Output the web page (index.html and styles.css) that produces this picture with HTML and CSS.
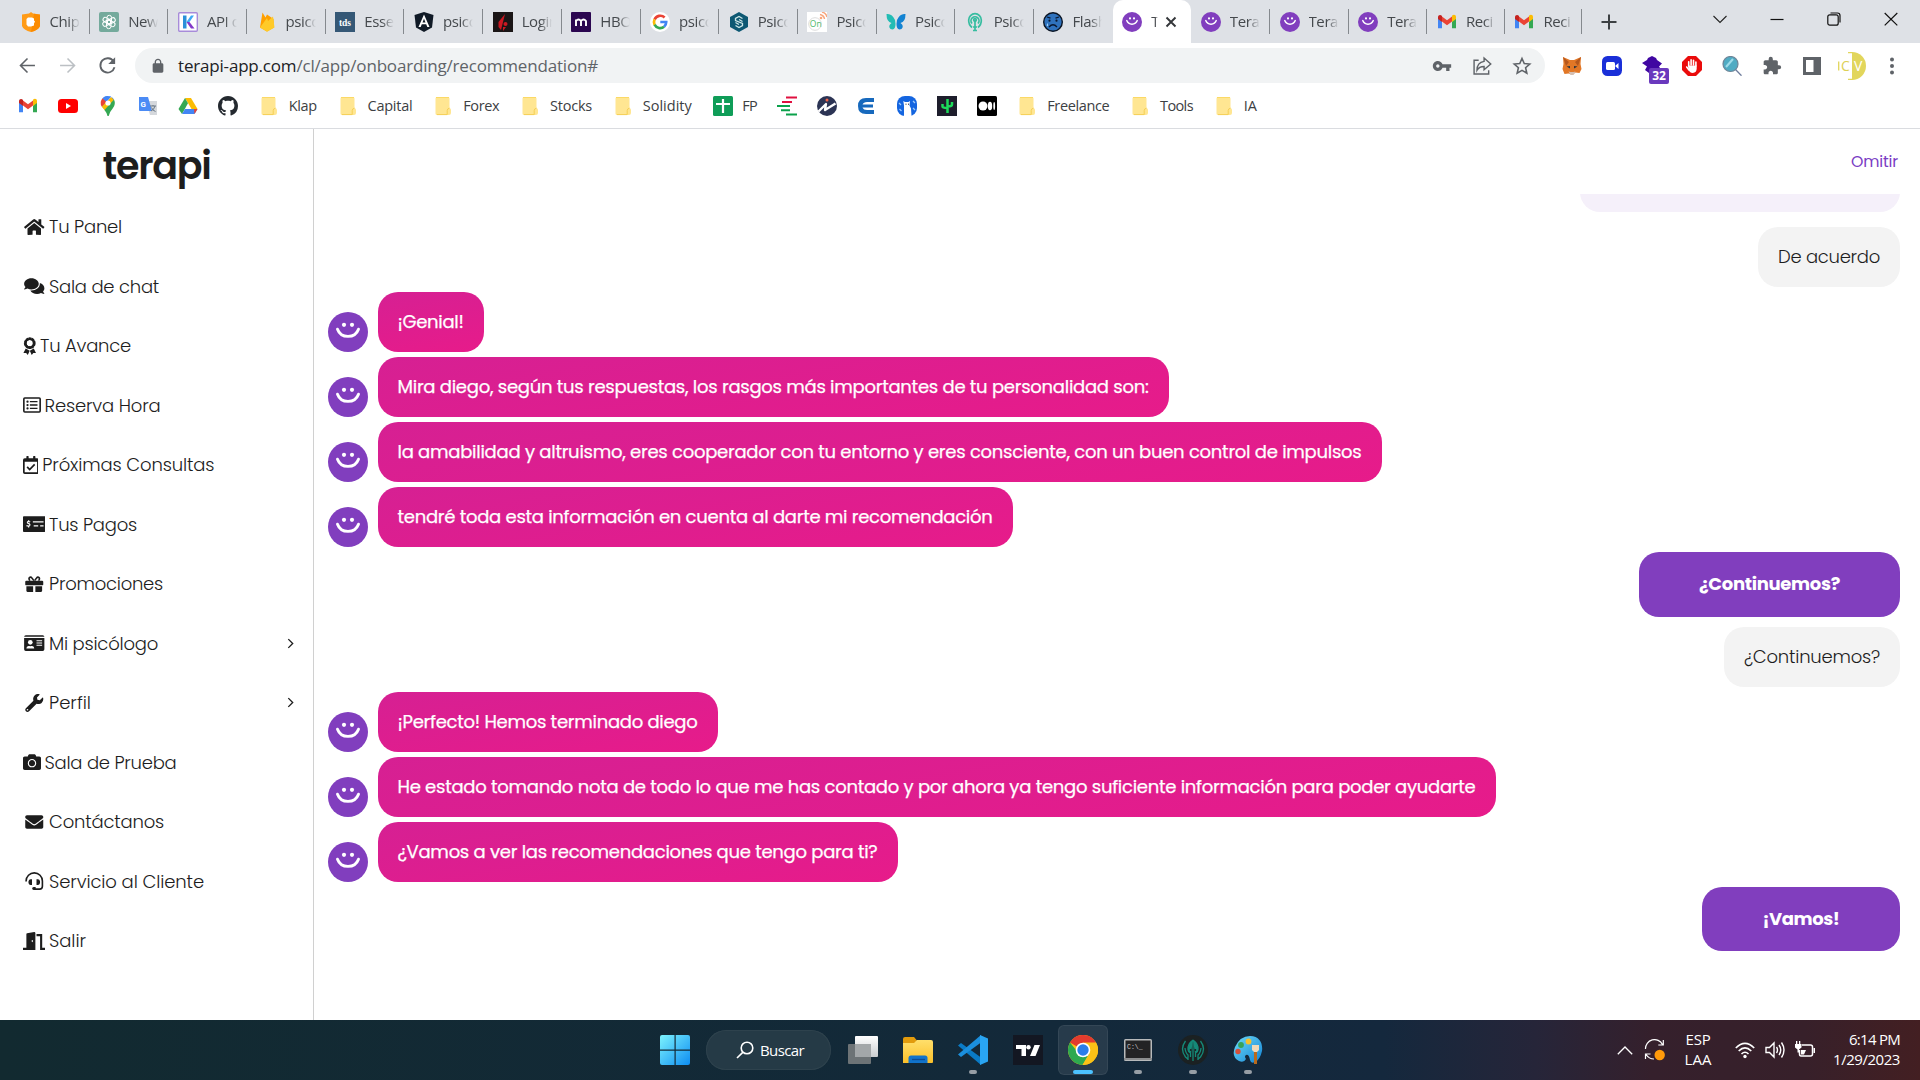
FILE: index.html
```html
<!DOCTYPE html>
<html lang="es">
<head>
<meta charset="utf-8">
<title>Terapi</title>
<link rel="stylesheet" href="styles.css">
</head>
<body>
<svg class="sprite" aria-hidden="true">
  <defs>
    <linearGradient id="g-win" x1="0" y1="0" x2="1" y2="1"><stop offset="0" stop-color="#7df3fd"/><stop offset="1" stop-color="#0d8df2"/></linearGradient>
    <linearGradient id="g-fold" x1="0" y1="0" x2="0" y2="1"><stop offset="0" stop-color="#ffdf6b"/><stop offset="1" stop-color="#fbc02a"/></linearGradient>
    <linearGradient id="g-paint" x1="0" y1="0" x2="1" y2="1"><stop offset="0" stop-color="#6fdcf8"/><stop offset="1" stop-color="#1283d4"/></linearGradient>
    <linearGradient id="g-tv" x1="0" y1="0" x2="0" y2="1"><stop offset="0" stop-color="#fff"/><stop offset="1" stop-color="#c9cdd0"/></linearGradient>
  </defs>
  <symbol id="smile" viewBox="0 0 40 40"><circle cx="20" cy="20" r="20" fill="#813ebe"/><circle cx="16" cy="12.8" r="2.1" fill="#fff"/><circle cx="24" cy="12.8" r="2.1" fill="#fff"/><path d="M9.5 17.2C13 26.8 27 26.8 30.5 17.2" fill="none" stroke="#fff" stroke-width="2.9" stroke-linecap="round"/></symbol>
  <symbol id="gmail" viewBox="0 0 20 20"><path d="M1 5v11.2h4V9.6z" fill="#4285f4"/><path d="M19 5v11.2h-4V9.6z" fill="#34a853"/><path d="M15 5v5l4-3V5c0-2-2.300-3-4-1.200z" fill="#fbbc04"/><path d="M5 4.500l5 3.800 5-3.800v5L10 13.200 5 9.500z" fill="#ea4335"/><path d="M1 5v2l4 3V4C3.500 2.300 1 3 1 5z" fill="#c5221f"/></symbol>
  <symbol id="folder" viewBox="0 0 16 20"><path d="M2 1h11q1.500 0 1.500 1.500V12q1.500.5 1.500 2v3q0 2-2 2H2Q.500 19 .500 17.500v-15Q.500 1 2 1z" fill="#ffe692"/><path d="M12.200 18.600v-4q0-2 2.300-2.500M12.200 18.600H2" fill="none" stroke="#f5cf55" stroke-width="1"/><path d="M1 1.500h13" stroke="#fbd966"/></symbol>
  <symbol id="back" viewBox="0 0 24 24"><path d="M20.500 12H4.500M12 4l-8 8 8 8" fill="none" stroke="currentColor" stroke-width="1.800"/></symbol>
  <symbol id="chev" viewBox="0 0 10 10"><path d="M3 1l4 4-4 4" fill="none" stroke="currentColor" stroke-width="1.200"/></symbol>
</svg>

<header class="browser">
  <div class="tabs">
    <div class="tab"><svg class="fav" viewBox="0 0 20 20"><path d="M10 0l2 1.500 7 1V14q-1.500 4-9 6-7.500-2-9-6V2.500l7-1z" fill="#ff9b17"/><path d="M13 1.700l6 1V14q-1.500 4-9 6z" fill="#fb8b00"/><path d="M7 5.500h4l2 1v2l1 1-1 2v2l-3 1H7l-1.500-2V7z" fill="#fff"/></svg><span>Chip C</span></div>
    <div class="tab"><svg class="fav" viewBox="0 0 20 20"><rect width="20" height="20" rx="2" fill="#74aa9c"/><g fill="none" stroke="#fff" stroke-width="1"><rect x="8" y="3.300" width="4.500" height="8.500" rx="2.200"/><rect x="8" y="3.300" width="4.500" height="8.500" rx="2.200" transform="rotate(60 10 10)"/><rect x="8" y="3.300" width="4.500" height="8.500" rx="2.200" transform="rotate(120 10 10)"/><rect x="8" y="3.300" width="4.500" height="8.500" rx="2.200" transform="rotate(180 10 10)"/><rect x="8" y="3.300" width="4.500" height="8.500" rx="2.200" transform="rotate(240 10 10)"/><rect x="8" y="3.300" width="4.500" height="8.500" rx="2.200" transform="rotate(300 10 10)"/></g></svg><span>New c</span></div>
    <div class="tab"><svg class="fav" viewBox="0 0 20 20"><rect x=".700" y=".700" width="18.600" height="18.600" rx="1" fill="#fff" stroke="#a78bd9" stroke-width="1.400"/><path d="M5 3.500h3.500v13H5z" fill="#2b90d9"/><path d="M8.500 10l4.500-6.500h3L11.500 10z" fill="#3fa9f5"/><path d="M8.500 10h3l5 6.500H13z" fill="#8338c9"/></svg><span>API de</span></div>
    <div class="tab"><svg class="fav" viewBox="0 0 20 20"><path d="M3 15.500L5.500.600 8.500 5.500l1.500-3L16.500 7 17 15.500 10 19.500z" fill="#ffa000"/><path d="M3 15.500L10 6l1 3 5-4.500 1.500 11-7.500 4.200z" fill="#ffca28"/></svg><span>psico</span></div>
    <div class="tab"><svg class="fav" viewBox="0 0 20 20"><rect width="20" height="20" fill="#355876"/><text x="10" y="13.500" text-anchor="middle" class="tds">tds</text></svg><span>Essen</span></div>
    <div class="tab"><svg class="fav" viewBox="0 0 20 20"><path d="M10 0l9.500 3L18 15.500 10 20 2 15.500.500 3z" fill="#101a26"/><path d="M10 2.500L4.500 15h2.200l1.100-2.800h4.400l1.100 2.800h2.200zm0 4.200l1.500 3.700h-3z" fill="#fff"/></svg><span>psico</span></div>
    <div class="tab"><svg class="fav" viewBox="0 0 20 20"><rect width="20" height="20" fill="#1a1516"/><path d="M12 2L8 18 5.500 15V10z" fill="#cc1822"/><circle cx="12.500" cy="12" r="2" fill="#cc1822"/><path d="M10 15h3l-3 4z" fill="#cc1822"/></svg><span>Login</span></div>
    <div class="tab"><svg class="fav" viewBox="0 0 20 20"><rect width="20" height="20" rx="1" fill="#2b0650"/><path d="M5 14V7.500M5 9q2.500-3 5 0v5M10 9q2.500-3 5 0v5" fill="none" stroke="#fff" stroke-width="1.900"/></svg><span>HBO</span></div>
    <div class="tab"><svg class="fav" viewBox="0 0 20 20"><circle cx="10" cy="10" r="10" fill="#fff"/><g fill="none" stroke-width="2.700"><path d="M14.600 5.500A6.200 6.200 0 0 0 4.600 7.500" stroke="#ea4335"/><path d="M4.600 7.300a6.200 6.200 0 0 0 0 5.500" stroke="#fbbc05"/><path d="M4.600 12.700a6.200 6.200 0 0 0 9.500 2" stroke="#34a853"/><path d="M10.300 10h5.900q0 3-2.100 4.800" stroke="#4285f4"/></g></svg><span>psico</span></div>
    <div class="tab"><svg class="fav" viewBox="0 0 20 20"><path d="M10 0l9 5v10l-9 5-9-5V5z" fill="#0d5873"/><path d="M13.500 6.500L10 4.500l-3.500 2v2l7 3v2l-3.500 2-3.500-2M6.500 10.500l3.500 2M13.500 9.500L10 7.500" fill="none" stroke="#cde6e6" stroke-width="1.300"/></svg><span>Psico</span></div>
    <div class="tab"><svg class="fav" viewBox="0 0 20 20"><rect width="20" height="20" fill="#fff"/><circle cx="8" cy="12" r="6.300" fill="none" stroke="#ddd"/><text x="2.800" y="15" class="onfav">On</text><path d="M13 2.500q4 1 4.500 4.500M15 0q4 1 5 5" fill="none" stroke="#f8a57c" stroke-width="1.500"/><circle cx="14" cy="6" r="1.300" fill="#f8a57c"/></svg><span>Psico</span></div>
    <div class="tab"><svg class="fav" viewBox="0 0 20 20"><path d="M9 8Q6 1 .500 2q0 8 5 9-4 3-1 6 5 2 5-5z" fill="#23bcb4"/><path d="M11 8q3-7 8.500-6 0 8-5 9 4 3 1 6-5 2-5-5z" fill="#1383d2"/></svg><span>Psico</span></div>
    <div class="tab"><svg class="fav" viewBox="0 0 20 20"><g fill="none" stroke="#36bda0" stroke-width="1.700"><path d="M7 15.500Q3.500 12.500 3.700 8A6.300 6.300 0 0 1 16.300 8q.2 4.500-3.300 7.500M7 11.500a4 4 0 1 1 6 0M10 8v10M8 18.500h4M8 15h4"/><circle cx="10" cy="8" r="1.300"/></g></svg><span>Psico</span></div>
    <div class="tab tab--last"><svg class="fav" viewBox="0 0 20 20"><circle cx="10" cy="10" r="9.300" fill="#2f72bd" stroke="#0b1524" stroke-width="1.400"/><path d="M4 5l3.500 1.200M12.500 6.200L16 5M6 15q4-4.500 8 0" fill="none" stroke="#0a1830" stroke-width="1.300"/><circle cx="6.500" cy="8.700" r="1.100" fill="#0a1830"/><circle cx="13.500" cy="8.700" r="1.100" fill="#0a1830"/><path d="M4.500 11q-1.500 3 0 3.200 1.300-.2 0-3.200z" fill="#9fd0f5"/></svg><span>Flash</span></div>
    <div class="tab tab--active"><svg class="fav"><use href="#smile"/></svg><span>T</span><svg class="tab-x" viewBox="0 0 12 12"><path d="M1.500 1.500l9 9M10.500 1.500l-9 9" stroke="#333639" stroke-width="1.900"/></svg></div>
    <div class="tab"><svg class="fav"><use href="#smile"/></svg><span>Terapi</span></div>
    <div class="tab"><svg class="fav"><use href="#smile"/></svg><span>Terapi</span></div>
    <div class="tab"><svg class="fav"><use href="#smile"/></svg><span>Terapi</span></div>
    <div class="tab tab--short"><svg class="fav"><use href="#gmail"/></svg><span>Reci</span></div>
    <div class="tab tab--short"><svg class="fav"><use href="#gmail"/></svg><span>Reci</span></div>
    <svg class="tab-new" viewBox="0 0 16 16"><path d="M8 .500v15M.500 8h15" stroke="#3c4043" stroke-width="2"/></svg>
    <div class="win-controls">
      <svg viewBox="0 0 14 14"><path d="M.500 4L7 10.500 13.500 4" fill="none" stroke="#222" stroke-width="1.100"/></svg>
      <svg viewBox="0 0 14 14"><path d="M.500 7.500h13" stroke="#111" stroke-width="1.200"/></svg>
      <svg viewBox="0 0 14 14"><path d="M3.500 1h7Q13 1 13 3.500v7" fill="none" stroke="#111" stroke-width="1.200"/><rect x=".800" y="2.800" width="10.400" height="10.400" rx="2" fill="none" stroke="#111" stroke-width="1.200"/></svg>
      <svg viewBox="0 0 14 14"><path d="M.700 1l12.600 12.400M13.300 1L.700 13.400" stroke="#111" stroke-width="1.200"/></svg>
    </div>
  </div>

  <div class="toolbar">
    <div class="nav-btns">
      <svg viewBox="0 0 24 24"><use href="#back"/></svg>
      <svg class="fwd" viewBox="0 0 24 24"><use href="#back"/></svg>
      <svg viewBox="0 0 24 24"><path d="M19 7.500A8.200 8.200 0 1 0 20 14" fill="none" stroke="currentColor" stroke-width="2.100"/><path d="M20.700 2.500v7.800h-7.800z" fill="currentColor"/></svg>
    </div>
    <div class="omnibox">
      <svg class="lock" viewBox="0 0 24 24"><path fill="#5f6368" d="M18 8h-1V6c0-2.760-2.240-5-5-5S7 3.240 7 6v2H6c-1.100 0-2 .900-2 2v10c0 1.100.900 2 2 2h12c1.100 0 2-.900 2-2V10c0-1.100-.900-2-2-2zM9 6c0-1.660 1.340-3 3-3s3 1.340 3 3v2H9V6z"/></svg>
      <span class="url" data-fit="420">terapi-app.com<span class="path">/cl/app/onboarding/recommendation#</span></span>
      <div class="omni-icons">
        <svg viewBox="0 0 24 24"><path fill="#5f6368" d="M12.650 10C11.830 7.670 9.610 6 7 6c-3.310 0-6 2.690-6 6s2.690 6 6 6c2.610 0 4.830-1.670 5.650-4H17v4h4v-4h2v-4H12.650zM7 14c-1.100 0-2-.900-2-2s.900-2 2-2 2 .900 2 2-.900 2-2 2z"/></svg>
        <svg viewBox="0 0 24 24"><path d="M8 5H2.500v16.500H20V17M14.500 2.500l8 7-8 7v-4q-6 0-8.500 4.500 0-9 8.500-10.500z" fill="none" stroke="#5f6368" stroke-width="1.700"/></svg>
        <svg viewBox="0 0 24 24"><path d="M12 3l2.700 6.100 6.600.6-5 4.400 1.500 6.500L12 17.200l-5.800 3.400 1.500-6.500-5-4.400 6.600-.6z" fill="none" stroke="#5f6368" stroke-width="1.900"/></svg>
      </div>
    </div>
    <div class="extensions">
      <svg viewBox="0 0 20 20"><path d="M1 1l7 3h4l7-3-.500 7 1 5-2 4-4-.5-2 1.500h-3L6.500 17.500l-4 .5-2-5 1-5z" fill="#e27726"/><path d="M1 1l6 5-3 4zM19 1l-6 5 3 4z" fill="#b5571c"/><path d="M4.500 10.500l3.500-.5v2.500zM15.500 10.500l-3.500-.5v2.500z" fill="#2b3440"/><path d="M6.500 15.500l2 .500h3l2-.500-2 3.500h-3z" fill="#d5bfb2"/></svg>
      <svg viewBox="0 0 20 20"><rect width="20" height="20" rx="5.500" fill="#1a2fd8"/><rect x="4" y="6" width="9" height="8" rx="1.500" fill="#fff"/><path d="M13.500 9.500l3-2.500v6l-3-2.500z" fill="#fff"/></svg>
      <div class="ext-badge"><svg viewBox="0 0 20 20"><path d="M10 0l4 2 1 2 5 3.500-3 3 2 3-8 6.500-8-6 2-3.500-5-3.500L5 4l1-2z" fill="#4007a2"/></svg><b>32</b></div>
      <svg viewBox="0 0 20 20"><path d="M6 0h8l6 6v8l-6 6H6l-6-6V6z" fill="#ea0b0b"/><path d="M6.700 10V5.800M9.100 9V3.800M11.500 9V4.200M13.900 10V6" stroke="#fff" stroke-width="1.600" stroke-linecap="round"/><path d="M5.900 9.500h8.800v3q0 4-4 4.500-2.800 0-4-3z" fill="#fff"/><path d="M7 14l-2.300-3" stroke="#fff" stroke-width="1.600" stroke-linecap="round"/></svg>
      <svg viewBox="0 0 20 20"><path d="M13.500 13.500l6 6.200" stroke="#6e7c9c" stroke-width="1.300"/><circle cx="8.500" cy="8" r="7.500" fill="#4fabc3" stroke="#6e8497" stroke-width="1.200"/><path d="M4 11l7-8" stroke="#9edbe9" stroke-width="2"/></svg>
      <svg viewBox="0 0 24 24"><path fill="#5f6368" d="M20.500 11H19V7c0-1.100-.900-2-2-2h-4V3.500a2.500 2.500 0 0 0-5 0V5H4c-1.100 0-1.990.900-1.990 2v3.800H3.500c1.490 0 2.700 1.210 2.700 2.700s-1.210 2.700-2.700 2.700H2V20c0 1.100.900 2 2 2h3.800v-1.500c0-1.490 1.210-2.700 2.700-2.700 1.490 0 2.700 1.210 2.700 2.700V22H17c1.100 0 2-.900 2-2v-4h1.500a2.500 2.500 0 0 0 0-5z"/></svg>
      <svg viewBox="0 0 20 20"><path d="M1 1h18v18H1zM4 4v12h7.500V4z" fill="#5f6368" fill-rule="evenodd"/></svg>
      <svg class="profile" viewBox="0 0 28 28"><path d="M14 0a14 14 0 0 1 0 28z" fill="#e2d65c"/><path d="M10 .700h5M10 27.300h5M.700 9.500v9" stroke="#e2d65c" stroke-width="1.300"/><text x="3" y="19" fill="#ddd056">C</text><text x="16" y="19" fill="#fff">V</text></svg>
      <svg viewBox="0 0 20 20"><g fill="#5f6368"><circle cx="10" cy="3.500" r="2"/><circle cx="10" cy="10" r="2"/><circle cx="10" cy="16.500" r="2"/></g></svg>
    </div>
  </div>

  <div class="bookmarks">
    <svg><use href="#gmail"/></svg>
    <svg viewBox="0 0 20 20"><rect y="3" width="20" height="14" rx="3.500" fill="#f00"/><path d="M8 7v6l5-3z" fill="#fff"/></svg>
    <svg viewBox="0 0 20 20"><path d="M10 0A7 7 0 0 0 4.500 2.500l4 4z" fill="#1a73e8"/><path d="M4.600 2.300A7 7 0 0 0 4 11l5-5z" fill="#ea4335"/><path d="M10 0q4 0 6 3.500L7 14 4 10.500l10-9z" fill="#4285f4"/><path d="M3.800 10.700L13 1l3 3-9 10.500z" fill="#fbbc04"/><path d="M16 3.500Q18 8 15 12q-3.500 4-4.300 8H9.500Q9 17 6.500 14z" fill="#34a853"/><path d="M4.500 2.300Q8-1 13 .700L8.500 6z" fill="#4285f4"/><circle cx="10" cy="7" r="2.600" fill="#fff"/></svg>
    <svg viewBox="0 0 20 20"><path d="M8 5h11v14H12z" fill="#d5d8dc"/><path d="M1 1h9l4 14H2q-1 0-1-1z" fill="#4b8bf5"/><text x="2.500" y="11" class="tr-g">G</text><path d="M12 10h6M15 9v1M17 10q-1 4-4 5M13.500 11.500q1 3 4 4" stroke="#6a7886" fill="none"/></svg>
    <svg viewBox="0 0 20 20"><path d="M7 2h6l6.500 11h-6z" fill="#fbbc04"/><path d="M7 2l3 5.200L4 18 .500 13z" fill="#34a853"/><path d="M7 13h12.500L16.500 18H4z" fill="#4285f4"/><path d="M16 13h3.500l-3 5z" fill="#ea4335"/></svg>
    <svg viewBox="0 0 16 16"><path fill="#24292f" d="M8 0C3.580 0 0 3.580 0 8c0 3.540 2.290 6.530 5.470 7.590.400.070.550-.170.550-.380 0-.190-.010-.820-.010-1.490-2.010.370-2.530-.490-2.690-.940-.090-.230-.480-.940-.820-1.130-.280-.150-.680-.520-.010-.530.630-.010 1.080.580 1.230.820.720 1.210 1.870.870 2.330.660.070-.520.280-.870.510-1.070-1.780-.200-3.640-.890-3.640-3.950 0-.870.310-1.590.820-2.150-.080-.200-.360-1.020.080-2.120 0 0 .670-.210 2.200.820.640-.180 1.320-.270 2-.270.680 0 1.360.090 2 .270 1.530-1.040 2.200-.820 2.200-.820.440 1.100.160 1.920.080 2.120.510.560.820 1.270.820 2.150 0 3.070-1.870 3.750-3.650 3.950.290.250.540.730.540 1.480 0 1.070-.010 1.930-.010 2.200 0 .210.150.460.550.380A8.013 8.013 0 0 0 16 8c0-4.420-3.580-8-8-8z"/></svg>
    <span class="bm"><svg><use href="#folder"/></svg><span data-fit="28">Klap</span></span>
    <span class="bm"><svg><use href="#folder"/></svg><span data-fit="45">Capital</span></span>
    <span class="bm"><svg><use href="#folder"/></svg><span data-fit="36">Forex</span></span>
    <span class="bm"><svg><use href="#folder"/></svg><span data-fit="42">Stocks</span></span>
    <span class="bm"><svg><use href="#folder"/></svg><span data-fit="49">Solidity</span></span>
    <span class="bm bm--fp"><svg viewBox="0 0 20 20"><rect width="20" height="20" rx="1.500" fill="#0f9d58"/><path d="M10 3v14M3 8h14" stroke="#fff" stroke-width="2.200"/></svg><span data-fit="15">FP</span></span>
    <svg viewBox="0 0 20 20"><path d="M9 1.500h11M5 6h10" stroke="#e0103f" stroke-width="2"/><path d="M0 10h13M4 14.200h9M9 18.500h11" stroke="#0ba14b" stroke-width="2"/></svg>
    <svg viewBox="0 0 20 20"><circle cx="10" cy="10" r="10" fill="#2c3454"/><path d="M1.500 15.500L9 8 8 14l10.500-6.500" fill="none" stroke="#fff" stroke-width="2.300" stroke-linejoin="round"/><circle cx="10" cy="4" r="1.500" fill="#f2654a"/></svg>
    <svg viewBox="0 0 20 20"><path d="M17 2H9Q1 2 1 10t8 8h8v-4h-7q-3.500 0-4.500-2.500H16v-3H5.500Q6.500 6 10 6h7z" fill="#1769bd"/></svg>
    <svg viewBox="0 0 20 20"><rect width="20" height="20" rx="8" fill="#1465e0"/><path d="M7 20V9.500L6.300 5l1.700 1h3.500L13 5l-.5 4.500 1.500 3 .5 7.500z" fill="#fff"/><path d="M8.500 8.200h1M11 8.200h1" stroke="#222"/><path d="M2 7l2 2M2.500 13l2 2M16 5l2 2M16 12l2 2" stroke="#9ccafb" stroke-width="1.300"/></svg>
    <svg viewBox="0 0 20 20"><rect width="20" height="20" fill="#1e1e2c"/><path d="M10.500 3v14M5.500 8v2.500q0 1.500 5 1.500M15 6v2.500q0 2-4.500 2" fill="none" stroke="#1ddb5a" stroke-width="2.500"/></svg>
    <svg viewBox="0 0 20 20"><rect width="20" height="20" rx="1.500" fill="#000"/><circle cx="6" cy="10" r="4.500" fill="#fff"/><ellipse cx="13" cy="10" rx="2.200" ry="4.300" fill="#fff"/><ellipse cx="17.200" cy="10" rx=".900" ry="3.900" fill="#fff"/></svg>
    <span class="bm bm--late"><svg><use href="#folder"/></svg><span data-fit="62">Freelance</span></span>
    <span class="bm"><svg><use href="#folder"/></svg><span data-fit="33">Tools</span></span>
    <span class="bm"><svg><use href="#folder"/></svg><span data-fit="13">IA</span></span>
  </div>
</header>

<div class="app">
  <aside class="sidebar">
    <h1 class="logo"><span data-fit="108">terapi</span></h1>
    <nav class="menu">
      <a><i class="fw"><svg viewBox="0 0 576 512"><path d="M280.370 148.260L96 300.110V464a16 16 0 0 0 16 16l112.060-.290a16 16 0 0 0 15.920-16V368a16 16 0 0 1 16-16h64a16 16 0 0 1 16 16v95.640a16 16 0 0 0 16 16.050L464 480a16 16 0 0 0 16-16V300L295.670 148.260a12.190 12.190 0 0 0-15.300 0zM571.600 251.470L488 182.560V44.050a12 12 0 0 0-12-12h-56a12 12 0 0 0-12 12v72.610L318.470 43a48 48 0 0 0-61 0L4.340 251.470a12 12 0 0 0-1.600 16.900l25.500 31A12 12 0 0 0 45.150 301l235.220-193.740a12.190 12.190 0 0 1 15.300 0L530.900 301a12 12 0 0 0 16.900-1.600l25.500-31a12 12 0 0 0-1.700-16.930z"/></svg></i><span data-fit="73">Tu Panel</span></a>
      <a><i class="fw"><svg viewBox="0 0 576 512"><path d="M416 192c0-88.400-93.100-160-208-160S0 103.600 0 192c0 34.300 14.100 65.900 38 92-13.400 30.200-35.500 54.200-35.800 54.500-2.200 2.300-2.800 5.700-1.500 8.700S4.800 352 8 352c36.600 0 66.900-12.300 88.700-25 32.200 15.700 70.300 25 111.300 25 114.900 0 208-71.600 208-160zm122 220c23.900-26 38-57.700 38-92 0-66.900-53.500-124.200-129.300-148.100.900 6.600 1.300 13.300 1.300 20.100 0 105.900-107.700 192-240 192-10.800 0-21.300-.800-31.700-1.900C207.800 439.600 281.800 480 368 480c41 0 79.100-9.200 111.300-25 21.800 12.700 52.100 25 88.700 25 3.200 0 6.100-1.900 7.300-4.800 1.300-2.900.700-6.300-1.500-8.700-.300-.300-22.400-24.200-35.800-54.500z"/></svg></i><span data-fit="110">Sala de chat</span></a>
      <a><i class="w14"><svg viewBox="0 0 384 512"><circle cx="192" cy="176" r="128" fill="none" stroke="#1d1d1d" stroke-width="78" stroke-dasharray="72 8.400"/><circle cx="192" cy="176" r="120" fill="none" stroke="#1d1d1d" stroke-width="62"/><path d="M78 330l-66 128 78-4 46 56 54-116zM306 330l66 128-78-4-46 56-54-116z"/></svg></i><span data-fit="91">Tu Avance</span></a>
      <a><i class="w18"><svg viewBox="0 0 512 512"><rect x="24" y="56" width="464" height="400" rx="26" fill="none" stroke="#1d1d1d" stroke-width="46"/><circle cx="128" cy="160" r="32"/><circle cx="128" cy="256" r="32"/><circle cx="128" cy="352" r="32"/><path d="M196 140h216v40H196zM196 236h216v40H196zM196 332h216v40H196z"/></svg></i><span data-fit="116">Reserva Hora</span></a>
      <a><i class="w16"><svg viewBox="0 0 448 512"><path fill-rule="evenodd" d="M48 64h48V12q0-12 12-12h40q12 0 12 12v52h128V12q0-12 12-12h40q12 0 12 12v52h48q48 0 48 48v352q0 48-48 48H48q-48 0-48-48V112q0-48 48-48zm0 96v304h352V160z"/><path d="M118 310l72 76 142-146" fill="none" stroke="#1d1d1d" stroke-width="48"/></svg></i><span data-fit="172">Próximas Consultas</span></a>
      <a><i class="fw"><svg viewBox="0 0 640 512"><path fill-rule="evenodd" d="M24 32h592q24 0 24 24v400q0 24-24 24H24q-24 0-24-24V56q0-24 24-24zm256 144v40h304v-40zm24 112v36h128v-36zm184 0v36h96v-36z"/><path d="M204 200q-26-20-56-14-30 10-20 36 8 12 38 22 40 16 26 50-18 24-54 18-20-2-38-16M160 150v36M160 314v40" fill="none" stroke="#fff" stroke-width="34"/></svg></i><span data-fit="88">Tus Pagos</span></a>
      <a><i class="fw"><svg viewBox="0 0 512 512"><path d="M32 320h192v160H64q-32 0-32-32zM288 320h192v128q0 32-32 32H288zM32 160h448q32 0 32 32v80q0 16-16 16H16q-16 0-16-16v-80q0-32 32-32z"/><path d="M246 160L190 86q-24-34-56-22-44 26-18 74l18 22M266 160l56-74q24-34 56-22 44 26 18 74l-18 22" fill="none" stroke="#1d1d1d" stroke-width="44"/></svg></i><span data-fit="114">Promociones</span></a>
      <a><i class="fw"><svg viewBox="0 0 576 512"><path fill-rule="evenodd" d="M48 32h480q48 0 48 46H0q0-46 48-46zM0 112h576v320q0 48-48 48H48q-48 0-48-48zm352 64v32h160v-32zm0 64v32h160v-32zm0 64v32h160v-32zM64 410h224q0-64-60-70h-24l-28 10-28-10h-24q-60 6-60 70z"/><circle cx="176" cy="238" r="66" fill="#fff"/></svg></i><span data-fit="109">Mi psicólogo</span><svg class="more"><use href="#chev"/></svg></a>
      <a><i class="fw"><svg viewBox="0 0 512 512"><path d="M507.730 109.100c-2.240-9.030-13.540-12.090-20.120-5.510l-74.360 74.360-67.880-11.310-11.310-67.880 74.360-74.360c6.620-6.620 3.430-17.900-5.660-20.160-47.380-11.740-99.550.910-136.580 37.930-39.640 39.640-50.550 97.100-34.050 147.200L18.740 402.760c-24.990 24.990-24.990 65.510 0 90.500 24.990 24.990 65.510 24.990 90.500 0l213.210-213.210c50.120 16.710 107.470 5.680 147.370-34.220 37.070-37.070 49.700-89.320 37.910-136.730zM64 472c-13.250 0-24-10.750-24-24 0-13.260 10.750-24 24-24s24 10.740 24 24c0 13.250-10.750 24-24 24z"/></svg></i><span data-fit="42">Perfil</span><svg class="more"><use href="#chev"/></svg></a>
      <a><i class="w18"><svg viewBox="0 0 512 512"><path d="M512 144v288c0 26.500-21.500 48-48 48H48c-26.500 0-48-21.500-48-48V144c0-26.500 21.500-48 48-48h88l12.300-32.900c7-18.700 24.900-31.100 44.900-31.100h125.500c20 0 37.900 12.400 44.900 31.100L376 96h88c26.500 0 48 21.500 48 48zM376 288c0-66.200-53.800-120-120-120s-120 53.800-120 120 53.800 120 120 120 120-53.800 120-120zm-32 0c0 48.500-39.500 88-88 88s-88-39.500-88-88 39.500-88 88-88 88 39.500 88 88z"/></svg></i><span data-fit="132">Sala de Prueba</span></a>
      <a><i class="fw"><svg viewBox="0 0 512 512"><path d="M502.300 190.800c3.900-3.100 9.700-.200 9.700 4.700V400c0 26.500-21.500 48-48 48H48c-26.500 0-48-21.500-48-48V195.600c0-5 5.700-7.800 9.700-4.700 22.400 17.400 52.100 39.500 154.100 113.600 21.100 15.400 56.700 47.800 92.200 47.600 35.700.300 72-32.800 92.300-47.600 102-74.100 131.600-96.300 154-113.700zM256 320c23.200.400 56.600-29.200 73.400-41.400 132.700-96.300 142.800-104.700 173.400-128.700 5.800-4.500 9.200-11.500 9.200-18.900v-19c0-26.500-21.500-48-48-48H48c-26.500 0-48 21.500-48 48v19c0 7.400 3.400 14.300 9.200 18.900 30.600 23.900 40.700 32.400 173.400 128.700 16.800 12.200 50.200 41.800 73.400 41.400z"/></svg></i><span data-fit="115">Contáctanos</span></a>
      <a><i class="fw"><svg viewBox="0 0 512 512"><path d="M24 272v-16a232 232 0 0 1 464 0v152q0 80-80 80H250" fill="none" stroke="#1d1d1d" stroke-width="46"/><path d="M192 208v160h-40q-48 0-60-56v-48q12-56 60-56zM320 208v160h40q48 0 60-56v-48q-12-56-60-56zM240 424h56v88h-56q-44-10-44-44t44-44z"/></svg></i><span data-fit="155">Servicio al Cliente</span></a>
      <a><i class="fw"><svg viewBox="0 0 640 512"><path fill-rule="evenodd" d="M0 448h96V64q0-24 20-30L320 0q32 0 32 32v480H0zm264-224q-18 0-18 32t18 32 18-32-18-32z"/><path d="M384 88h132v392h124" fill="none" stroke="#1d1d1d" stroke-width="60"/></svg></i><span data-fit="37">Salir</span></a>
    </nav>
  </aside>

  <main class="chat">
    <div class="chat-head"><a class="skip" data-fit="47">Omitir</a></div>
    <div class="thread">
      <div class="past"></div>
      <div class="user"><span data-fit="102">De acuerdo</span></div>
      <div class="bot"><svg><use href="#smile"/></svg><p><span data-fit="66">¡Genial!</span></p></div>
      <div class="bot"><svg><use href="#smile"/></svg><p><span data-fit="751">Mira diego, según tus respuestas, los rasgos más importantes de tu personalidad son:</span></p></div>
      <div class="bot"><svg><use href="#smile"/></svg><p><span data-fit="964">la amabilidad y altruismo, eres cooperador con tu entorno y eres consciente, con un buen control de impulsos</span></p></div>
      <div class="bot"><svg><use href="#smile"/></svg><p><span data-fit="595">tendré toda esta información en cuenta al darte mi recomendación</span></p></div>
      <button class="reply"><span data-fit="141">¿Continuemos?</span></button>
      <div class="user"><span data-fit="136">¿Continuemos?</span></div>
      <div class="bot"><svg><use href="#smile"/></svg><p><span data-fit="300">¡Perfecto! Hemos terminado diego</span></p></div>
      <div class="bot"><svg><use href="#smile"/></svg><p><span data-fit="1078">He estado tomando nota de todo lo que me has contado y por ahora ya tengo suficiente información para poder ayudarte</span></p></div>
      <div class="bot"><svg><use href="#smile"/></svg><p><span data-fit="480">¿Vamos a ver las recomendaciones que tengo para ti?</span></p></div>
      <button class="reply reply--go"><span data-fit="77">¡Vamos!</span></button>
    </div>
  </main>
</div>

<footer class="taskbar">
  <div class="dock">
    <div class="app-icon"><svg viewBox="0 0 30 30"><path d="M2 0h12.500v14.500H0V2q0-2 2-2zM15.700 0H28q2 0 2 2v12.500H15.700zM0 15.700h14.500V30H2q-2 0-2-2zM15.700 15.700H30V28q0 2-2 2H15.700z" fill="url(#g-win)"/></svg></div>
    <div class="search"><svg viewBox="0 0 18 18"><circle cx="11" cy="7" r="5.800" fill="none" stroke="#fff" stroke-width="1.600"/><path d="M7 11.200L1 17" stroke="#fff" stroke-width="1.700"/></svg><span data-fit="44">Buscar</span></div>
    <div class="app-icon"><svg viewBox="0 0 30 30"><rect x="0" y="9" width="23" height="20" rx="1" fill="#6d7376"/><rect x="7" y="1" width="23" height="21" rx="1" fill="url(#g-tv)"/><path d="M7 9h16v13H7z" fill="#a3a7a9"/></svg></div>
    <div class="app-icon"><svg viewBox="0 0 30 30"><path d="M0 4q0-2 2-2h9l3 3.500V9H0z" fill="#e29b0c"/><path d="M0 8h11l3-3h14q2 0 2 2v20q0 1-1 1H0z" fill="url(#g-fold)"/><path d="M5.500 28v-5q0-2.500 2.500-2.500h14q2.500 0 2.500 2.500v5z" fill="#1173cb"/><path d="M9 24.500h13" stroke="#0c4b94" stroke-width="1.300"/></svg></div>
    <div class="app-icon run"><svg viewBox="0 0 30 30"><path d="M0 10.500l3-2.500L23 22.500V30z" fill="#0a7bc6"/><path d="M0 19.500l3 2.500L23 7.500V0z" fill="#1b8fdd"/><path d="M22 0l8 3.500v23L22 30z" fill="#29a5f3"/></svg></div>
    <div class="app-icon"><svg viewBox="0 0 30 30"><rect width="30" height="30" fill="#131722"/><path d="M3 10h10v11H8.500v-7H3z" fill="#fff"/><circle cx="15.500" cy="12.200" r="2.200" fill="#fff"/><path d="M21.500 10H27l-4.500 11H17z" fill="#fff"/></svg></div>
    <div class="app-icon run focus"><svg viewBox="0 0 30 30"><circle cx="15" cy="15" r="15" fill="#fbc116"/><path d="M15 15L2 7.500a15 15 0 0 1 26 0z" fill="#e33b2e"/><path d="M15 15H8L2 7.500A15 15 0 0 0 14.500 30L22 18z" fill="#2da94f"/><path d="M15 7.500h13A15 15 0 0 1 14.500 30L21.500 18z" fill="#fbc116"/><circle cx="15" cy="15" r="7.300" fill="#fff"/><circle cx="15" cy="15" r="5.700" fill="#2a7de9"/></svg></div>
    <div class="app-icon run"><svg viewBox="0 0 30 30"><rect x="1" y="4" width="28" height="22" rx="1.500" fill="#b8babb"/><rect x="2.500" y="5.500" width="25" height="17.500" fill="#232325"/><text x="4" y="13.500" class="cmd">C:\_</text><path d="M1 24h28" stroke="#8b8d8f" stroke-width="2"/></svg></div>
    <div class="app-icon run"><svg viewBox="0 0 30 30"><circle cx="15" cy="15" r="15" fill="#1b2122"/><path d="M15 5q-5.500 4-5 9.500 0 2 2.500 3.500v4M15 5q5.500 4 5 9.500 0 2-2.500 3.500v4M15 6v20" fill="#158a78" stroke="#158a78" stroke-width="1.300"/><path d="M7.500 6q-6 8 0 16l3 2.500M22.500 6q6 8 0 16l-3 2.500M7 13q.500 5 3 7v5M23 13q-.500 5-3 7v5" fill="none" stroke="#158a78" stroke-width="1.300"/><circle cx="12.700" cy="15" r="1" fill="#1b2122"/><circle cx="17.300" cy="15" r="1" fill="#1b2122"/></svg></div>
    <div class="app-icon run"><svg viewBox="0 0 30 30"><path d="M17 1C27 1 30 9 29 16q-2 9-7 11-4 2-5-2-1-6-4-5-2 1 0 4-2 4-7 2Q-2 22 2 12 7 1 17 1z" fill="url(#g-paint)"/><circle cx="15.500" cy="6.500" r="2.900" fill="#f7c02c"/><circle cx="8" cy="10" r="2.900" fill="#37a35a"/><circle cx="5" cy="16.500" r="2.700" fill="#d6503a"/><path d="M19 10h7v5l-2 2h-3l-2-2z" fill="#f0d9b8"/><path d="M22.500 17v12" stroke="#b96a1d" stroke-width="3"/></svg></div>
  </div>
  <div class="tray">
    <svg class="up" viewBox="0 0 16 9"><path d="M.800 8.300L8 1l7.200 7.300" fill="none" stroke="#fff" stroke-width="1.300"/></svg>
    <svg class="sync" viewBox="0 0 22 22"><path d="M1.500 10A9 9 0 0 1 18.500 5.500M19.300 1v5h-5M1.500 20v-5h5M2 15.500Q5 20 10 20" fill="none" stroke="#fff" stroke-width="1.200"/><circle cx="15.700" cy="16" r="5.200" fill="#ff9a0a"/></svg>
    <div class="lang"><span data-fit="25">ESP</span><span data-fit="27">LAA</span></div>
    <div class="status">
      <svg viewBox="0 0 20 18"><g fill="none" stroke="#fff" stroke-width="1.600"><path d="M.800 7q9.200-9.300 18.400 0M3.700 10q6.300-6.300 12.600 0M6.500 13q3.500-3.500 7 0"/></g><circle cx="10" cy="15.500" r="1.700" fill="#fff"/></svg>
      <svg viewBox="0 0 20 18"><path d="M1 6.500h3.500L9 2v14l-4.500-4.500H1z M11.500 6q2 3 0 6M14 4q3.500 5 0 10M16.500 1.500q5 7.500 0 15" fill="none" stroke="#fff" stroke-width="1.400"/></svg>
      <svg viewBox="0 0 20 18"><path d="M7 4h8.500q2 0 2 2v7q0 2-2 2H6q-1.500 0-1.500-2V9" fill="none" stroke="#fff" stroke-width="1.500"/><path d="M0 3h6.500v3.500L4 8.500v3H2.500v-3L0 6.500zM1 0h1.300v3H1zM4 0h1.300v3H4zM18.500 7h1.500v5h-1.500zM6 9h5l-2 4.500H6z" fill="#fff"/></svg>
    </div>
    <div class="clock"><span data-fit="51">6:14 PM</span><span data-fit="67">1/29/2023</span></div>
  </div>
</footer>
<script src="fit.js"></script>
</body>
</html>
```
FILE: styles.css
```css
* { box-sizing: border-box; }
body { margin: 0; width: 1920px; height: 1080px; overflow: hidden; display: flex; flex-direction: column; background: #fff; font-family: "Open Sans", "Noto Sans", sans-serif; }
svg { display: block; flex: none; }
.sprite { width: 0; height: 0; position: absolute; }
[data-fit] { display: inline-block; white-space: nowrap; }

/* browser chrome */
.browser { height: 129px; flex: none; border-bottom: 1px solid #dadce0; }
.tabs { height: 43px; background: #dee1e6; display: flex; align-items: center; padding-left: 11px; font-size: 15px; color: #45494d; }
.tab { width: 78.7px; height: 25px; flex: none; display: flex; align-items: center; padding-left: 9.5px; border-right: 1px solid #85898e; }
.tab span { width: 30px; margin-left: 9px; overflow: hidden; white-space: nowrap; letter-spacing: -.4px; line-height: 25px; -webkit-mask-image: linear-gradient(90deg, #000 60%, transparent); mask-image: linear-gradient(90deg, #000 60%, transparent); }
.tab--short { width: 77.5px; }
.tab--last { border-right-color: transparent; }
.fav { width: 20px; height: 20px; }
.tab--active { height: 43px; background: #fff; border: 0; border-radius: 10px 10px 0 0; }
.tab--active span { width: 7px; }
.tab-x { width: 12px; height: 12px; margin-left: 7px; }
.tab-new { width: 16px; height: 16px; margin-left: 19px; }
.win-controls { margin: -6px 22px 0 auto; display: flex; gap: 43px; }
.win-controls svg { width: 14px; height: 14px; }
.tds { font: bold 9.5px "Liberation Serif", serif; fill: #fff; }
.onfav { font: 8.5px "Open Sans", sans-serif; fill: #4cb86b; }
.tr-g { font: bold 8px Roboto, sans-serif; fill: #fff; }
.cmd { font: 6.5px "Liberation Mono", monospace; fill: #ccc; }

.toolbar { height: 45px; display: flex; align-items: center; padding: 0 17px; color: #5f6368; }
.nav-btns { display: flex; gap: 19px; width: 118px; }
.nav-btns svg { width: 21px; height: 21px; }
.nav-btns .fwd { transform: scaleX(-1); color: #bcc0c4; }
.omnibox { width: 1410px; height: 35px; border-radius: 18px; background: #f1f3f4; display: flex; align-items: center; padding: 0 13px; font-size: 17px; color: #202124; }
.lock { width: 16px; height: 16px; margin: 0 12px 0 2px; }
.path { color: #5f6368; }
.omni-icons { display: flex; gap: 20px; margin-left: auto; }
.omni-icons svg { width: 20px; height: 20px; }
.extensions { display: flex; align-items: center; gap: 20px; margin-left: 17px; }
.extensions svg { width: 20px; height: 20px; }
.extensions .profile { width: 28px; height: 28px; margin: 0 -4px; font: 14px "Open Sans", sans-serif; }
.ext-badge { position: relative; }
.ext-badge b { position: absolute; left: 7px; top: 12px; width: 20px; height: 16px; border-radius: 2px; background: #6a39bd; color: #fff; font-size: 12px; line-height: 16px; text-align: center; }

.bookmarks { height: 36px; display: flex; align-items: center; gap: 20px; padding-left: 18px; font-size: 14.5px; color: #3c4043; }
.bookmarks > svg { width: 20px; height: 20px; }
.bm { display: flex; align-items: center; gap: 12px; margin-left: 2.75px; }
.bm > span { margin-top: -2px; }
.bm svg { width: 16px; height: 20px; }
.bm--fp { gap: 9px; margin-left: 1.5px; }
.bm--fp svg { width: 20px; }
.bm--late { margin-left: 2px; }

/* application */
.app { flex: 1; min-height: 0; display: flex; font-family: Poppins, Inter, "Noto Sans", sans-serif; font-size: 18px; color: #1d1d1d; }
.sidebar { width: 314px; border-right: 1px solid #d0d0d0; flex: none; }
.logo { margin: 0; height: 68px; padding-top: 12px; font-size: 38px; line-height: 50px; font-weight: 600; text-align: center; }
.menu a { height: 59.5px; display: flex; align-items: center; gap: 4px; padding: 0 17px 0 22.5px; font-weight: 300; }
.menu i { display: flex; justify-content: center; flex: none; }
.menu i svg { height: 18px; width: 100%; fill: #1d1d1d; }
.fw { width: 22.5px; }
.w14 { width: 13.5px; }
.w16 { width: 15.75px; }
.w18 { width: 18px; }
.menu .more { width: 11px; height: 11px; margin-left: auto; color: #1d1d1d; }

.chat { flex: 1; min-width: 0; display: flex; flex-direction: column; padding: 0 20px 0 14px; }
.chat-head { height: 65px; flex: none; display: flex; justify-content: flex-end; align-items: center; padding-right: 2px; }
.skip { font-size: 15.75px; color: #7a3cc4; }
.thread { flex: 1; min-height: 0; overflow: hidden; display: flex; flex-direction: column; gap: 5px; }
.thread > * { flex: none; }
.past { width: 320px; height: 60px; margin: -42px 0 10px; align-self: flex-end; border-radius: 20px; background: #f5f0fa; }
.user { align-self: flex-end; height: 60px; padding: 0 20px 2px; border-radius: 20px; background: #f3f3f3; display: flex; align-items: center; font-weight: 300; }
.bot { display: flex; align-items: flex-end; gap: 10px; }
.bot svg { width: 40px; height: 40px; }
.bot p { margin: 0; height: 60px; padding: 0 20.5px 2px 19.5px; border-radius: 20px; display: flex; align-items: center; color: #fff; -webkit-text-stroke: .25px #fff; background: linear-gradient(170deg, #d62093, #e71b8a); }
.reply { align-self: flex-end; width: 261px; height: 65px; margin: 0 0 5px; padding: 0 0 2px; border: 0; border-radius: 20px; background: #813ebe; color: #fff; font: inherit; font-weight: 700; text-align: center; }
.reply--go { width: 198px; height: 64px; }

/* taskbar */
.taskbar { height: 60px; flex: none; display: flex; align-items: center; justify-content: flex-end; padding-right: 20px; color: #fff; font-size: 15px; background: linear-gradient(90deg, #122a30 0, #13293a 55%, #14283d 72%, #262539 80%, #35202c 86%, #37202a 94%, #431f22 100%); }
.dock { display: flex; align-items: center; gap: 5px; width: 625px; margin-right: 343px; }
.app-icon { width: 50px; height: 50px; display: flex; align-items: center; justify-content: center; position: relative; border-radius: 6px; }
.app-icon svg { width: 30px; height: 30px; }
.app-icon:nth-child(1) { width: 49px; margin-left: 1px; }
.run::after { content: ""; position: absolute; bottom: 1px; left: 21px; width: 8px; height: 4px; border-radius: 2px; background: #979ea5; }
.focus { background: #ffffff16; box-shadow: inset 0 0 0 1px #ffffff10; }
.focus::after { left: 15px; width: 20px; background: #4cc2ff; }
.search { width: 125px; height: 40px; border-radius: 20px; background: #253a46; box-shadow: inset 0 0 0 1px #2e424d; display: flex; align-items: center; padding-left: 30px; gap: 6px; margin: 0 2px 0 2px; }
.search svg { width: 18px; height: 18px; }
.tray { display: flex; align-items: center; width: 283px; }
.up { width: 16px; height: 9px; }
.sync { width: 22px; height: 22px; margin-left: 11px; }
.lang { width: 30px; margin: -2px 0 0 17px; display: flex; flex-direction: column; align-items: center; line-height: 20px; }
.status { display: flex; gap: 10px; margin-left: 22px; }
.status svg { width: 20px; height: 18px; }
.clock { margin: -2px 0 0 auto; display: flex; flex-direction: column; align-items: flex-end; line-height: 20px; }
```
FILE: fit.js
```js
// Adjusts each label's letter-spacing so that it spans the width in data-fit.
document.querySelectorAll('[data-fit]').forEach(function (el) {
  var target = parseFloat(el.dataset.fit);
  var natural = el.getBoundingClientRect().width;
  var spacing = (target - natural) / el.textContent.length;
  el.style.letterSpacing = spacing.toFixed(3) + 'px';
});
```
